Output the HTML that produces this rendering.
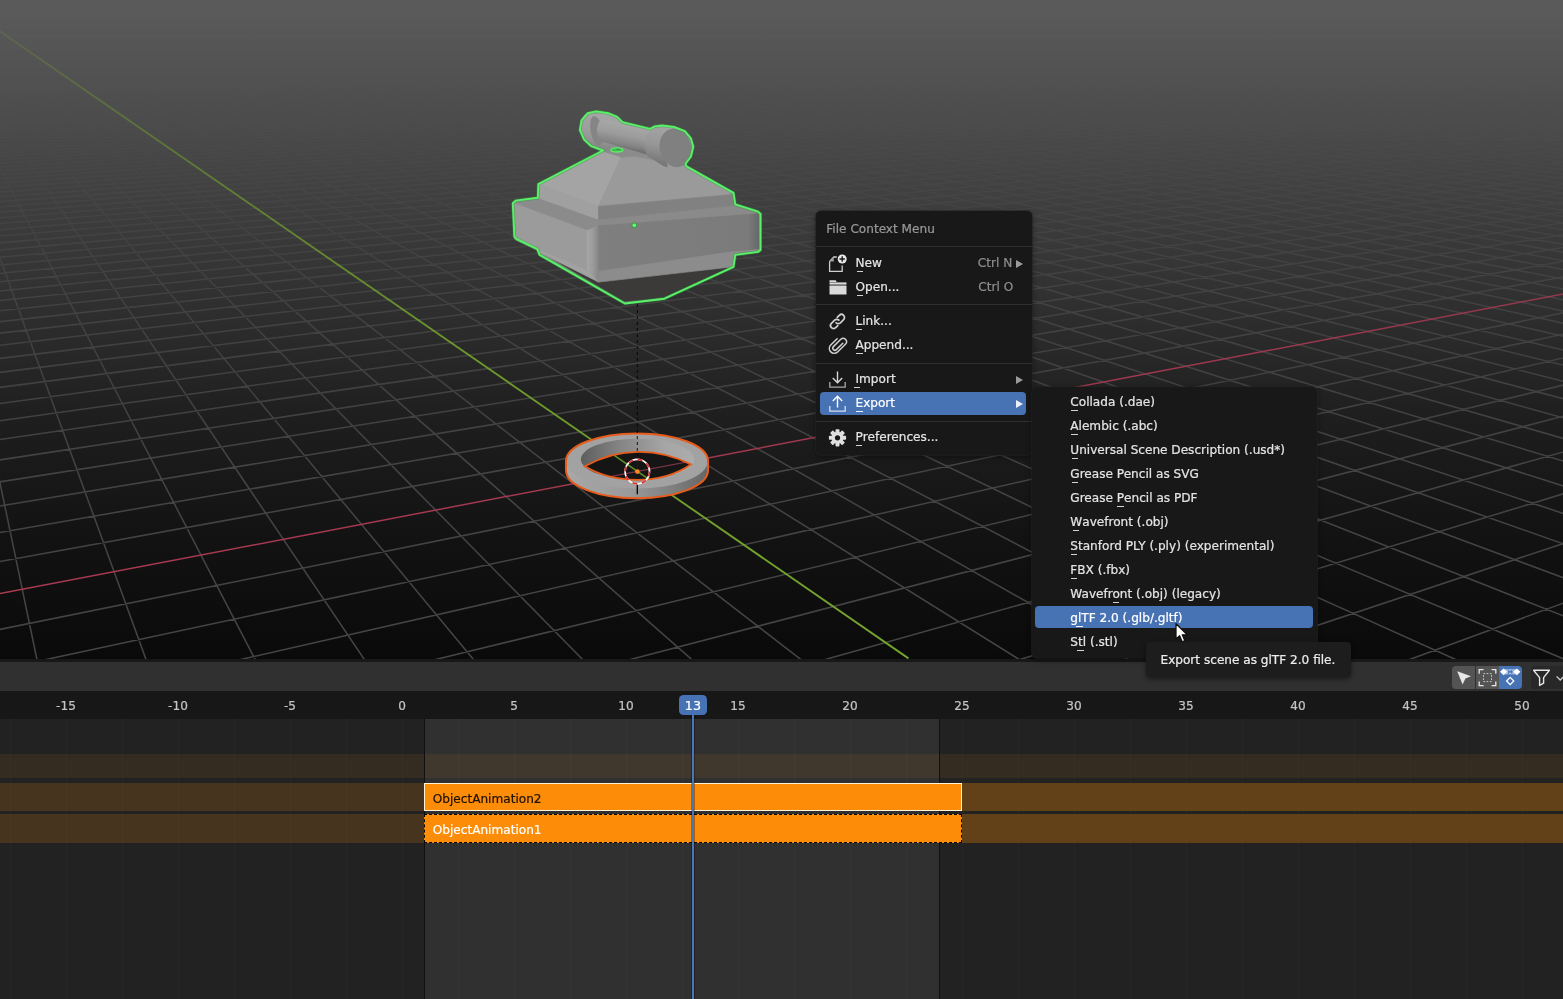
<!DOCTYPE html><html lang="en"><head><meta charset="utf-8"><title>Blender - File Context Menu</title><style>
*{box-sizing:border-box;margin:0;padding:0}
html,body{width:1563px;height:999px;overflow:hidden;background:#0b0b0b}
body{font-family:"DejaVu Sans","Liberation Sans",sans-serif;font-size:12.1px;color:#e0e0e0;position:relative;-webkit-text-stroke:.22px currentColor}
u{text-decoration:none;position:relative}u::after{content:"";position:absolute;left:50%;width:6.4px;margin-left:-3.2px;bottom:-2.4px;height:1.4px;background:currentColor;opacity:.92}
#vp{position:absolute;left:0;top:0;width:1563px;height:659px;overflow:hidden;
 background:linear-gradient(180deg,#5a5a5a 0px,#585858 30px,#4d4d4d 110px,#3c3c3c 220px,#2d2d2d 320px,#1e1e1e 420px,#121212 540px,#0a0a0a 659px)}
#vp svg{position:absolute;left:0;top:0}
#tl{position:absolute;left:0;top:659px;width:1563px;height:340px;background:#181818}
#tlhead{position:absolute;left:0;top:2.5px;width:100%;height:29.5px;background:#303030}
#ruler{position:absolute;left:0;top:32px;width:100%;height:27.5px;background:#171717}
.rl{position:absolute;top:0;width:40px;text-align:center;line-height:31px;font-size:12.1px;color:#c4c4c4}
#tracks{position:absolute;left:0;top:59.5px;width:100%;height:280.5px;background:#222;overflow:hidden}
.inrange{position:absolute;top:0;bottom:0;background:#303030}
.vg{position:absolute;top:0;bottom:0;width:1px;background:rgba(255,255,255,.02)}
.fl{position:absolute;top:0;bottom:0;width:1.3px;background:#101010}
.rowA{position:absolute;left:0;right:0;background:rgba(255,150,20,.085)}
.rowL{position:absolute;background:rgba(255,140,10,.17)}
.rowR{position:absolute;background:rgba(255,140,0,.295)}
.strip{position:absolute;background:#fd8c08;font-size:12.1px;line-height:27px}
.strip span{position:absolute;left:7.4px;top:0}
.s2{border:1.3px solid #fff3d6;color:#1c1204;line-height:31.4px}
.s1{border:1.7px dashed #050505;color:#fff;line-height:31.2px}
#cfline{position:absolute;left:692.1px;top:40px;width:2.1px;bottom:0;background:#4b76b8;box-shadow:0 0 0 .7px rgba(0,0,0,.45)}
#cfbox{position:absolute;left:678.6px;top:36px;width:28.6px;height:19.8px;border-radius:4.5px;background:#4772b3;color:#fff;text-align:center;line-height:22.6px;font-size:12.7px;overflow:hidden}
.hb{position:absolute;top:7px;width:23px;height:22.6px;background:#545454}
.hb.on{background:#4772b3}
.hb svg{position:absolute;left:0;top:0}
#filt{position:absolute;left:1530.5px;top:7px;width:40px;height:22.6px;background:#282828;border-radius:4px 0 0 4px}
.menu,#tip,#tl{will-change:transform}
.menu{position:absolute;background:#181818;border-radius:5px;box-shadow:0 0 0 .6px #242424,0 2px 6px rgba(0,0,0,.45)}
.mtitle{position:absolute;left:10.3px;top:10px;font-size:12.1px;color:#989898;line-height:16px}
.sep{position:absolute;left:0;right:0;height:1.2px;background:#2f2f2f}
.row{position:absolute;left:4.2px;width:206px;height:22.6px;border-radius:4px;line-height:23.8px}
.row.sel,.row2.sel{background:#4772b3;color:#fff}
.row .ic{position:absolute;left:7.2px;top:1.1px}
.lbl{position:absolute;left:35.3px;top:0;color:#e4e4e4}
.sel .lbl,.sel .lbl2{color:#fff}
.sc{position:absolute;top:0;color:#8e8e8e}
.arr{position:absolute;right:3.4px;top:7.6px;width:0;height:0;border-left:7px solid #9a9a9a;border-top:4.1px solid transparent;border-bottom:4.1px solid transparent}
.sel .arr{border-left-color:#e8eefa}
.row2{position:absolute;left:3.2px;width:277.8px;height:22px;border-radius:4px;line-height:24px}
.lbl2{position:absolute;left:35.1px;top:0;color:#e4e4e4}
#tip{position:absolute;left:1145.5px;top:642px;width:205px;height:34.5px;border-radius:4.5px;background:#1d1d1d;box-shadow:0 2px 5px rgba(0,0,0,.5);color:#ececec;line-height:36px;padding-left:14.5px;font-size:12.1px;white-space:nowrap}
#mouse{position:absolute;left:1173.8px;top:621.6px}
</style></head><body>
<div id="vp"><svg width="1563" height="659" viewBox="0 0 1563 659">
<defs>
<linearGradient id="gfade" x1="0" y1="0" x2="0" y2="659" gradientUnits="userSpaceOnUse">
<stop offset="0" stop-color="#fff" stop-opacity="0"/><stop offset=".03" stop-color="#fff" stop-opacity="0"/><stop offset=".08" stop-color="#fff" stop-opacity=".04"/><stop offset=".18" stop-color="#fff" stop-opacity=".13"/><stop offset=".3" stop-color="#fff" stop-opacity=".26"/><stop offset=".45" stop-color="#fff" stop-opacity=".5"/><stop offset=".7" stop-color="#fff" stop-opacity=".72"/><stop offset="1" stop-color="#fff" stop-opacity=".8"/></linearGradient>
<linearGradient id="gfade2" x1="0" y1="0" x2="0" y2="659" gradientUnits="userSpaceOnUse"><stop offset="0" stop-color="#fff" stop-opacity=".1"/><stop offset=".1" stop-color="#fff" stop-opacity=".27"/><stop offset=".3" stop-color="#fff" stop-opacity=".62"/><stop offset=".55" stop-color="#fff" stop-opacity=".9"/><stop offset="1" stop-color="#fff" stop-opacity="1"/></linearGradient>
<mask id="mfade2" maskUnits="userSpaceOnUse" x="0" y="0" width="1563" height="659"><rect width="1563" height="659" fill="url(#gfade2)"/></mask>
<mask id="mfade" maskUnits="userSpaceOnUse" x="0" y="0" width="1563" height="659"><rect width="1563" height="659" fill="url(#gfade)"/></mask>
<linearGradient id="gcorner" x1="586.7" y1="0" x2="598.6" y2="0" gradientUnits="userSpaceOnUse"><stop offset="0" stop-color="#a6a6a6"/><stop offset=".5" stop-color="#9c9c9c"/><stop offset="1" stop-color="#858585"/></linearGradient>
<linearGradient id="gfront" x1="598" y1="0" x2="760" y2="0" gradientUnits="userSpaceOnUse"><stop offset="0" stop-color="#7f7f7f"/><stop offset=".85" stop-color="#7b7b7b"/><stop offset=".93" stop-color="#7a7a7a"/><stop offset="1" stop-color="#666"/></linearGradient>
<linearGradient id="gtube" x1="624" y1="123" x2="619" y2="148.5" gradientUnits="userSpaceOnUse"><stop offset="0" stop-color="#a8a8a8"/><stop offset=".45" stop-color="#9c9c9c"/><stop offset=".8" stop-color="#858585"/><stop offset="1" stop-color="#6c6c6c"/></linearGradient>
<linearGradient id="gcap" x1="593" y1="111" x2="586" y2="150" gradientUnits="userSpaceOnUse"><stop offset="0" stop-color="#a6a6a6"/><stop offset=".55" stop-color="#9c9c9c"/><stop offset="1" stop-color="#808080"/></linearGradient>
<linearGradient id="gcap2" x1="660" y1="126" x2="652" y2="163" gradientUnits="userSpaceOnUse"><stop offset="0" stop-color="#a4a4a4"/><stop offset=".5" stop-color="#979797"/><stop offset="1" stop-color="#757575"/></linearGradient>
<linearGradient id="gring" x1="566" y1="0" x2="708" y2="0" gradientUnits="userSpaceOnUse"><stop offset="0" stop-color="#a8a8a8"/><stop offset=".45" stop-color="#9a9a9a"/><stop offset=".8" stop-color="#7a7a7a"/><stop offset="1" stop-color="#666"/></linearGradient>
<linearGradient id="gringin" x1="581" y1="0" x2="694" y2="0" gradientUnits="userSpaceOnUse"><stop offset="0" stop-color="#5e5e5e"/><stop offset=".35" stop-color="#858585"/><stop offset=".75" stop-color="#a6a6a6"/><stop offset="1" stop-color="#acacac"/></linearGradient>
</defs>
<g mask="url(#mfade)"><path d="M-5 459L37.9 664M-5 244.6L147.7 664M-5 158.2L257.5 664M-5 111.6L367.4 664M-5 82.3L477.2 664M-5 62.3L587 664M-5 47.7L696.9 664M-5 36.7L806.7 664M-5 20.9L1026.4 664M-5 15.1L1136.2 664M-5 10.3L1246.1 664M-5 6.2L1355.9 664M-5 2.6L1465.7 664M-5 -0.5L1568 660.8M-5 -3.2L1568 617.7M-3.4 -5L1568 579.5M2.8 -5L1568 545.5M8.9 -5L1568 515M15.1 -5L1568 487.5M21.3 -5L1568 462.5M27.4 -5L1568 439.8M33.6 -5L1568 419.1M39.8 -5L1568 400M45.9 -5L1568 382.5M52.1 -5L1568 366.3M58.3 -5L1568 351.2M64.4 -5L1568 337.3M70.6 -5L1568 324.2M76.8 -5L1568 312.1M82.9 -5L1568 300.7M89.1 -5L1568 290M95.3 -5L1568 280M101.4 -5L1568 270.5M107.6 -5L1568 261.6M113.8 -5L1568 253.2M119.9 -5L1568 245.2M126.1 -5L1568 237.6M132.3 -5L1568 230.5M138.5 -5L1568 223.6M144.6 -5L1568 217.1M150.8 -5L1568 211M157 -5L1568 205.1M163.1 -5L1568 199.4M169.3 -5L1568 194M175.5 -5L1568 188.9M181.6 -5L1568 184M187.8 -5L1568 179.2M194 -5L1568 174.7M200.1 -5L1568 170.3M206.3 -5L1568 166.1M212.5 -5L1568 162.1M218.6 -5L1568 158.2M224.8 -5L1568 154.5M231 -5L1568 150.9M237.1 -5L1568 147.4M243.3 -5L1568 144.1M249.5 -5L1568 140.8M255.6 -5L1568 137.7M261.8 -5L1568 134.7M268 -5L1568 131.7M274.1 -5L1568 128.9M280.3 -5L1568 126.2M286.5 -5L1568 123.5M292.6 -5L1568 120.9M298.8 -5L1568 118.4M305 -5L1568 116M311.1 -5L1568 113.7M317.3 -5L1568 111.4M323.5 -5L1568 109.2M329.6 -5L1568 107M335.8 -5L1568 104.9M342 -5L1568 102.9M348.1 -5L1568 100.9M354.3 -5L1568 98.9M360.5 -5L1568 97.1M366.6 -5L1568 95.2M372.8 -5L1568 93.4M379 -5L1568 91.7M385.1 -5L1568 90M391.3 -5L1568 88.3M397.5 -5L1568 86.7M403.6 -5L1568 85.1M409.8 -5L1568 83.6M416 -5L1568 82.1M422.1 -5L1568 80.6M428.3 -5L1568 79.2M434.5 -5L1568 77.8M440.7 -5L1568 76.4M446.8 -5L1568 75.1M453 -5L1568 73.8M459.2 -5L1568 72.5M465.3 -5L1568 71.2M471.5 -5L1568 70M477.7 -5L1568 68.8M483.8 -5L1568 67.6M490 -5L1568 66.5M496.2 -5L1568 65.3M502.3 -5L1568 64.2M508.5 -5L1568 63.1M514.7 -5L1568 62.1M520.8 -5L1568 61M527 -5L1568 60M533.2 -5L1568 59M539.3 -5L1568 58M545.5 -5L1568 57M551.7 -5L1568 56.1M557.8 -5L1568 55.2M564 -5L1568 54.3M570.2 -5L1568 53.4M576.3 -5L1568 52.5M582.5 -5L1568 51.6M588.7 -5L1568 50.8M594.8 -5L1568 49.9M601 -5L1568 49.1M607.2 -5L1568 48.3M613.3 -5L1568 47.5M619.5 -5L1568 46.7M625.7 -5L1568 46M631.8 -5L1568 45.2M638 -5L1568 44.5M644.2 -5L1568 43.7M650.3 -5L1568 43M656.5 -5L1568 42.3M662.7 -5L1568 41.6M668.8 -5L1568 40.9M675 -5L1568 40.3M681.2 -5L1568 39.6M687.3 -5L1568 38.9M693.5 -5L1568 38.3M699.7 -5L1568 37.7M705.8 -5L1568 37M712 -5L1568 36.4M718.2 -5L1568 35.8M724.3 -5L1568 35.2M730.5 -5L1568 34.6M736.7 -5L1568 34.1M742.8 -5L1568 33.5M749 -5L1568 32.9M755.2 -5L1568 32.4M761.4 -5L1568 31.8M767.5 -5L1568 31.3M773.7 -5L1568 30.8M779.9 -5L1568 30.2M786 -5L1568 29.7M792.2 -5L1568 29.2M798.4 -5L1568 28.7M804.5 -5L1568 28.2M810.7 -5L1568 27.7M816.9 -5L1568 27.2M823 -5L1568 26.8M829.2 -5L1568 26.3M835.4 -5L1568 25.8M841.5 -5L1568 25.4M847.7 -5L1568 24.9M853.9 -5L1568 24.5M860 -5L1568 24M866.2 -5L1568 23.6M872.4 -5L1568 23.2M878.5 -5L1568 22.7M884.7 -5L1568 22.3M890.9 -5L1568 21.9M897 -5L1568 21.5M903.2 -5L1568 21.1M909.4 -5L1568 20.7M915.5 -5L1568 20.3M921.7 -5L1568 19.9M927.9 -5L1568 19.5M934 -5L1568 19.2M940.2 -5L1568 18.8M946.4 -5L1568 18.4M952.5 -5L1568 18M958.7 -5L1568 17.7M964.9 -5L1568 17.3M971 -5L1568 17M977.2 -5L1568 16.6M983.4 -5L1568 16.3M989.5 -5L1568 15.9M995.7 -5L1568 15.6M1001.9 -5L1568 15.3M1008 -5L1568 14.9M1014.2 -5L1568 14.6M1020.4 -5L1568 14.3M1026.5 -5L1568 14M1032.7 -5L1568 13.6M1038.9 -5L1568 13.3M1045 -5L1568 13M1051.2 -5L1568 12.7M1057.4 -5L1568 12.4M1063.6 -5L1568 12.1M1069.7 -5L1568 11.8M1075.9 -5L1568 11.5M1082.1 -5L1568 11.2M1088.2 -5L1568 10.9M1094.4 -5L1568 10.6M1100.6 -5L1568 10.4M1106.7 -5L1568 10.1M1112.9 -5L1568 9.8M1119.1 -5L1568 9.5M1125.2 -5L1568 9.3M1131.4 -5L1568 9M1137.6 -5L1568 8.7M1143.7 -5L1568 8.5M1149.9 -5L1568 8.2M1156.1 -5L1568 7.9M1162.2 -5L1568 7.7M1168.4 -5L1568 7.4M1174.6 -5L1568 7.2M1568 601.4L1397.3 664M1568 541.9L1201.3 664M1568 492.4L1005.2 664M1568 450.6L809.2 664M1568 414.9L613.1 664M1568 383.9L417.1 664M1568 356.9L221 664M1568 333.1L25 664M1568 311.9L-5 630.4M1568 276L-5 562.4M1568 260.6L-5 533.3M1568 246.6L-5 506.8M1568 233.9L-5 482.7M1568 222.2L-5 460.6M1568 211.5L-5 440.3M1568 201.6L-5 421.5M1568 192.4L-5 404.1M1568 183.9L-5 388M1568 175.9L-5 373M1568 168.6L-5 359M1568 161.6L-5 345.9M1568 155.2L-5 333.7M1568 149.1L-5 322.2M1568 143.3L-5 311.3M1568 138L-5 301.1M1568 132.9L-5 291.5M1568 128L-5 282.3M1568 123.5L-5 273.7M1568 119.1L-5 265.5M1568 115L-5 257.7M1568 111.1L-5 250.3M1568 107.4L-5 243.3M1568 103.8L-5 236.5M1568 100.5L-5 230.1M1568 97.2L-5 224M1568 94.1L-5 218.1M1568 91.2L-5 212.5M1568 88.3L-5 207.1M1568 85.6L-5 202M1568 83L-5 197M1568 80.5L-5 192.3M1568 78L-5 187.7M1568 75.7L-5 183.3M1568 73.5L-5 179.1M1568 71.3L-5 175M1568 69.2L-5 171.1M1568 67.2L-5 167.3M1568 65.3L-5 163.6M1568 63.4L-5 160.1M1568 61.6L-5 156.6M1568 59.9L-5 153.3M1568 58.2L-5 150.1M1568 56.5L-5 147M1568 55L-5 144M1568 53.4L-5 141.1M1568 51.9L-5 138.3M1568 50.5L-5 135.5M1568 49.1L-5 132.9M1568 47.7L-5 130.3M1568 46.4L-5 127.8M1568 45.1L-5 125.4M1568 43.9L-5 123M1568 42.6L-5 120.7M1568 41.5L-5 118.5M1568 40.3L-5 116.3M1568 39.2L-5 114.1M1568 38.1L-5 112.1M1568 37L-5 110.1M1568 36L-5 108.1M1568 35L-5 106.2M1568 34L-5 104.3M1568 33L-5 102.5M1568 32.1L-5 100.7M1568 31.2L-5 99M1568 30.3L-5 97.3M1568 29.4L-5 95.6M1568 28.5L-5 94M1568 27.7L-5 92.4M1568 26.9L-5 90.9M1568 26.1L-5 89.4M1568 25.3L-5 87.9M1568 24.6L-5 86.5M1568 23.8L-5 85M1568 23.1L-5 83.7M1568 22.4L-5 82.3M1568 21.7L-5 81M1568 21L-5 79.7M1568 20.3L-5 78.4M1568 19.6L-5 77.2M1568 19L-5 75.9M1568 18.4L-5 74.7M1568 17.7L-5 73.6M1568 17.1L-5 72.4M1568 16.5L-5 71.3M1568 16L-5 70.2M1568 15.4L-5 69.1M1568 14.8L-5 68M1568 14.3L-5 67M1568 13.7L-5 66M1568 13.2L-5 65M1568 12.7L-5 64M1568 12.2L-5 63M1568 11.6L-5 62M1568 11.2L-5 61.1M1568 10.7L-5 60.2M1568 10.2L-5 59.3M1568 9.7L-5 58.4M1568 9.3L-5 57.5M1568 8.8L-5 56.6M1568 8.3L-5 55.8M1568 7.9L-5 55M1568 7.5L-5 54.1M1568 7.1L-5 53.3M1568 6.6L-5 52.5M1568 6.2L-5 51.8M1568 5.8L-5 51M1568 5.4L-5 50.2M1568 5L-5 49.5M1568 4.6L-5 48.8M1568 4.3L-5 48.1M1568 3.9L-5 47.3M1568 3.5L-5 46.6M1568 3.1L-5 46M1568 2.8L-5 45.3M1568 2.4L-5 44.6M1568 2.1L-5 44M1568 1.7L-5 43.3M1568 1.4L-5 42.7M1568 1.1L-5 42M1568 0.7L-5 41.4M1568 0.4L-5 40.8M1568 0.1L-5 40.2M1568 -0.2L-5 39.6M1568 -0.5L-5 39M1568 -0.8L-5 38.4M1568 -1.1L-5 37.9M1568 -1.4L-5 37.3M1568 -1.7L-5 36.7M1568 -2L-5 36.2M1568 -2.3L-5 35.7M1568 -2.6L-5 35.1M1568 -2.9L-5 34.6M1568 -3.1L-5 34.1M1568 -3.4L-5 33.6M1568 -3.7L-5 33.1M1568 -3.9L-5 32.6M1568 -4.2L-5 32.1M1568 -4.4L-5 31.6M1568 -4.7L-5 31.1M1568 -4.9L-5 30.6M1559.2 -5L-5 30.2M1548.2 -5L-5 29.7M1537.2 -5L-5 29.2M1526.2 -5L-5 28.8M1515.2 -5L-5 28.3M1504.2 -5L-5 27.9M1493.2 -5L-5 27.5M1482.2 -5L-5 27M1471.2 -5L-5 26.6M1460.1 -5L-5 26.2M1449.1 -5L-5 25.8M1438.1 -5L-5 25.4M1427.1 -5L-5 25M1416.1 -5L-5 24.6M1405.1 -5L-5 24.2M1394.1 -5L-5 23.8M1383.1 -5L-5 23.4M1372.1 -5L-5 23M1361.1 -5L-5 22.6M1350.1 -5L-5 22.2M1339.1 -5L-5 21.9M1328 -5L-5 21.5M1317 -5L-5 21.1M1306 -5L-5 20.8M1295 -5L-5 20.4M1284 -5L-5 20.1M1273 -5L-5 19.7M1262 -5L-5 19.4M1251 -5L-5 19M1240 -5L-5 18.7M1229 -5L-5 18.4M1218 -5L-5 18M1207 -5L-5 17.7M1195.9 -5L-5 17.4M1184.9 -5L-5 17.1M1173.9 -5L-5 16.8M1162.9 -5L-5 16.4M1151.9 -5L-5 16.1M1140.9 -5L-5 15.8M1129.9 -5L-5 15.5M1118.9 -5L-5 15.2M1107.9 -5L-5 14.9M1096.9 -5L-5 14.6M1085.9 -5L-5 14.3M1074.9 -5L-5 14.1M1063.8 -5L-5 13.8M1052.8 -5L-5 13.5M1041.8 -5L-5 13.2M1030.8 -5L-5 12.9M1019.8 -5L-5 12.7M1008.8 -5L-5 12.4M997.8 -5L-5 12.1M986.8 -5L-5 11.8M975.8 -5L-5 11.6M964.8 -5L-5 11.3M953.8 -5L-5 11.1M942.8 -5L-5 10.8M931.7 -5L-5 10.5M920.7 -5L-5 10.3M909.7 -5L-5 10M898.7 -5L-5 9.8M887.7 -5L-5 9.5M876.7 -5L-5 9.3M865.7 -5L-5 9.1M854.7 -5L-5 8.8M843.7 -5L-5 8.6M832.7 -5L-5 8.3M821.7 -5L-5 8.1M810.7 -5L-5 7.9M799.6 -5L-5 7.7M788.6 -5L-5 7.4M777.6 -5L-5 7.2M766.6 -5L-5 7M755.6 -5L-5 6.8M744.6 -5L-5 6.5M733.6 -5L-5 6.3M722.6 -5L-5 6.1M711.6 -5L-5 5.9M700.6 -5L-5 5.7M689.6 -5L-5 5.5M678.6 -5L-5 5.3M667.5 -5L-5 5.1M656.5 -5L-5 4.8M645.5 -5L-5 4.6M634.5 -5L-5 4.4M623.5 -5L-5 4.2M612.5 -5L-5 4M601.5 -5L-5 3.8M590.5 -5L-5 3.7M579.5 -5L-5 3.5M568.5 -5L-5 3.3M557.5 -5L-5 3.1M546.4 -5L-5 2.9M535.4 -5L-5 2.7M524.4 -5L-5 2.5M513.4 -5L-5 2.3M502.4 -5L-5 2.1M491.4 -5L-5 2M480.4 -5L-5 1.8M469.4 -5L-5 1.6M458.4 -5L-5 1.4M447.4 -5L-5 1.2M436.4 -5L-5 1.1M425.4 -5L-5 0.9M414.3 -5L-5 0.7M403.3 -5L-5 0.6M392.3 -5L-5 0.4M381.3 -5L-5 0.2M370.3 -5L-5 0M359.3 -5L-5 -0.1M348.3 -5L-5 -0.3M337.3 -5L-5 -0.4M326.3 -5L-5 -0.6M315.3 -5L-5 -0.8M304.3 -5L-5 -0.9M293.3 -5L-5 -1.1M282.2 -5L-5 -1.2M271.2 -5L-5 -1.4M260.2 -5L-5 -1.6M249.2 -5L-5 -1.7M238.2 -5L-5 -1.9M227.2 -5L-5 -2M216.2 -5L-5 -2.2M205.2 -5L-5 -2.3M194.2 -5L-5 -2.5M183.2 -5L-5 -2.6M172.2 -5L-5 -2.8M161.2 -5L-5 -2.9M150.1 -5L-5 -3.1M139.1 -5L-5 -3.2M128.1 -5L-5 -3.3M117.1 -5L-5 -3.5M106.1 -5L-5 -3.6M95.1 -5L-5 -3.8M84.1 -5L-5 -3.9M73.1 -5L-5 -4M62.1 -5L-5 -4.2M51.1 -5L-5 -4.3M40.1 -5L-5 -4.5M29.1 -5L-5 -4.6M18 -5L-5 -4.7M7 -5L-5 -4.9M-4 -5L-5 -5" stroke="#545454" stroke-width="1.55" fill="none"/></g>
<g mask="url(#mfade2)"><path d="M0 31.4L908.4 658.4" stroke="#76a62e" stroke-width="1.9"/>
<path d="M0 593.6L1563 294" stroke="#ac3b53" stroke-width="1.5"/></g>
<path d="M566.0 461.0 A71.0 27.6 0 0 1 708.0 461.0 L708.0 470.6 A71.0 27.6 0 0 1 566.0 470.6 Z" fill="url(#gring)"/>
<ellipse cx="637.0" cy="461.0" rx="71.0" ry="27.6" fill="#a2a2a2"/>
<ellipse cx="637.5" cy="459.3" rx="56.6" ry="20.5" fill="url(#gringin)"/>
<path d="M584.9 466.3 Q611 451.6 638.9 451.8 Q667 452 690.9 464.4 Q668 479.8 637.6 479.8 Q607 479.8 584.9 466.3 Z" fill="#151515"/>
<clipPath id="eyeclip"><path d="M584.9 466.3 Q611 451.6 638.9 451.8 Q667 452 690.9 464.4 Q668 479.8 637.6 479.8 Q607 479.8 584.9 466.3 Z"/></clipPath>
<g clip-path="url(#eyeclip)"><path d="M0 31.4L908.4 658.4" stroke="#5f8d26" stroke-width="1.6"/><path d="M0 593.6L1563 294" stroke="#7a3345" stroke-width="1.3"/></g>
<path d="M584.9 466.3 Q611 451.6 638.9 451.8 Q667 452 690.9 464.4 Q668 479.8 637.6 479.8 Q607 479.8 584.9 466.3 Z" fill="none" stroke="#e85c1b" stroke-width="1.8"/>
<path d="M566.0 461.0 A71.0 27.6 0 0 1 708.0 461.0 L708.0 470.6 A71.0 27.6 0 0 1 566.0 470.6 Z" fill="none" stroke="#e85c1b" stroke-width="2"/>
<polygon points="603.0,150.5 538.4,184.1 537.8,197.8 515.6,200.6 512.8,203.2 514.4,236.8 516.8,239.2 537.2,248.9 539.6,254.9 624.9,303.5 664.4,298.7 733.5,266.9 735.3,254.9 758.1,251.9 760.5,250.1 760.5,214.0 758.1,211.6 735.3,204.4 733.5,192.8 686.1,166.1 685.5,163.7 690.9,156.5 693.3,146.8 690.9,138.4 684.9,131.2 674.1,127.0 662.0,125.5 654.8,126.4 650.1,128.8 622.5,122.2 617.1,116.8 608.1,113.2 596.1,111.4 587.7,113.2 581.7,120.4 579.9,130.0 584.1,139.6 591.3,146.2 603.3,150.5" fill="#8d8d8d" stroke="#8d8d8d" stroke-width=".7" stroke-linejoin="round" />
<polygon points="539.9,251.5 598.6,281.2 733.0,265.9 733.9,268.0 664.9,298.2 624.1,301.6" fill="#3b3a38" stroke="#3b3a38" stroke-width=".7" stroke-linejoin="round" />
<polygon points="604.5,150.5 622.4,154.5 598.6,206.4 539.9,184.6" fill="#a4a4a4" stroke="#a4a4a4" stroke-width=".7" stroke-linejoin="round" />
<polygon points="622.4,154.5 685.4,166.4 733.9,194.4 598.6,206.4" fill="#9a9a9a" stroke="#9a9a9a" stroke-width=".7" stroke-linejoin="round" />
<polygon points="539.9,184.6 598.6,206.4 598.6,220.3 538.7,198.7" fill="#a0a0a0" stroke="#a0a0a0" stroke-width=".7" stroke-linejoin="round" />
<polygon points="513.8,203.3 538.7,198.7 598.6,220.3 598.6,225.4 586.7,230.2" fill="#8b8b8b" stroke="#8b8b8b" stroke-width=".7" stroke-linejoin="round" />
<polygon points="513.8,203.3 586.7,230.2 586.7,270.2 539.9,251.5 514.9,239.5" fill="#9b9b9b" stroke="#9b9b9b" stroke-width=".7" stroke-linejoin="round" />
<polygon points="586.7,230.2 598.6,225.4 598.6,282.1 586.7,270.2" fill="url(#gcorner)" />
<polygon points="539.9,250.6 586.7,270.2 598.6,282.1 539.9,252.6" fill="#a2a2a2" stroke="#a2a2a2" stroke-width=".7" stroke-linejoin="round" />
<polygon points="598.6,206.4 733.9,194.4 734.7,206.0 598.6,220.0" fill="#818181" stroke="#818181" stroke-width=".7" stroke-linejoin="round" />
<polygon points="598.6,220.0 734.7,206.0 758.9,213.2 598.6,225.6" fill="#8a8a8a" stroke="#8a8a8a" stroke-width=".7" stroke-linejoin="round" />
<polygon points="598.6,225.6 758.9,213.2 759.7,248.9 733.9,251.5 598.6,271.4" fill="url(#gfront)" />
<polygon points="598.6,271.4 733.9,251.5 733.0,266.8 598.6,282.1" fill="#8c8c8c" stroke="#8c8c8c" stroke-width=".7" stroke-linejoin="round" />
<polygon points="604.0,151.6 621.9,157.2 645.2,154.7 635.2,147.3 611.9,147.3" fill="#8b8b8b" stroke="#8b8b8b" stroke-width=".7" stroke-linejoin="round" />
<polygon points="603.6,151.4 599.5,150.6 592.0,147.3 585.3,141.4 581.2,134.8 579.5,128.1 580.3,120.6 584.5,114.8 591.1,111.9 599.5,111.5 609.4,114.0 616.1,117.3 621.9,122.7 621.9,137.3 611.9,148.9" fill="url(#gcap)" />
<ellipse cx="596.7" cy="130.8" rx="6.1" ry="14.8" transform="rotate(-11 596.7 130.8)" fill="#858585"/>
<polygon points="600.7,119.6 621.9,123.0 650.2,130.0 647.3,154.9 644.4,153.8 599.9,140.8 597.4,135.6 596.8,129.8 598.0,124.0" fill="url(#gtube)" />
<polygon points="650.2,130.0 655.2,126.6 667.7,126.3 680.2,129.0 663.5,143.9 667.7,167.2 663.5,166.0 646.9,155.7 644.5,147.3 645.6,136.4" fill="url(#gcap2)" />
<ellipse cx="675.3" cy="147.9" rx="15.6" ry="19.4" transform="rotate(-13 675.3 147.9)" fill="#808080"/>
<polygon points="603.0,150.5 538.4,184.1 537.8,197.8 515.6,200.6 512.8,203.2 514.4,236.8 516.8,239.2 537.2,248.9 539.6,254.9 624.9,303.5 664.4,298.7 733.5,266.9 735.3,254.9 758.1,251.9 760.5,250.1 760.5,214.0 758.1,211.6 735.3,204.4 733.5,192.8 686.1,166.1 685.5,163.7 690.9,156.5 693.3,146.8 690.9,138.4 684.9,131.2 674.1,127.0 662.0,125.5 654.8,126.4 650.1,128.8 622.5,122.2 617.1,116.8 608.1,113.2 596.1,111.4 587.7,113.2 581.7,120.4 579.9,130.0 584.1,139.6 591.3,146.2 603.3,150.5" fill="none" stroke="#2f9a3c" stroke-width="3.2" stroke-linejoin="round" opacity=".55"/>
<polygon points="603.0,150.5 538.4,184.1 537.8,197.8 515.6,200.6 512.8,203.2 514.4,236.8 516.8,239.2 537.2,248.9 539.6,254.9 624.9,303.5 664.4,298.7 733.5,266.9 735.3,254.9 758.1,251.9 760.5,250.1 760.5,214.0 758.1,211.6 735.3,204.4 733.5,192.8 686.1,166.1 685.5,163.7 690.9,156.5 693.3,146.8 690.9,138.4 684.9,131.2 674.1,127.0 662.0,125.5 654.8,126.4 650.1,128.8 622.5,122.2 617.1,116.8 608.1,113.2 596.1,111.4 587.7,113.2 581.7,120.4 579.9,130.0 584.1,139.6 591.3,146.2 603.3,150.5" fill="none" stroke="#5cf06a" stroke-width="1.9" stroke-linejoin="round"/>
<ellipse cx="616.9" cy="149.9" rx="6" ry="2.1" fill="#3fc04e" stroke="#5cf06a" stroke-width="1.3"/>
<ellipse cx="618.2" cy="149.4" rx="2.2" ry="0.7" fill="#4d8a52"/>
<circle cx="634.3" cy="225.3" r="2.4" fill="#6cf47a" stroke="#2c9a3a" stroke-width="1"/>
<path d="M637.3 304V456" stroke="#000" stroke-width="1" stroke-dasharray="3 3" opacity=".85"/>
<path d="M637.3 484V494.2" stroke="#000" stroke-width="1.3"/><path d="M637.3 459.5V468" stroke="#222" stroke-width="1" opacity=".6"/>
<circle cx="637.3" cy="471.6" r="12.2" fill="none" stroke="#fff" stroke-width="1.7"/>
<circle cx="637.3" cy="471.6" r="12.2" fill="none" stroke="#e22b2b" stroke-width="1.7" stroke-dasharray="4.79 4.79"/>
<circle cx="637.4" cy="471.6" r="2.3" fill="#ff8a1c"/>
</svg></div>
<div id="tl">
<div id="tlhead"></div>
<div id="ruler">
<span class="rl" style="left:46.0px">-15</span>
<span class="rl" style="left:158.0px">-10</span>
<span class="rl" style="left:270.0px">-5</span>
<span class="rl" style="left:382.0px">0</span>
<span class="rl" style="left:494.0px">5</span>
<span class="rl" style="left:606.0px">10</span>
<span class="rl" style="left:718.0px">15</span>
<span class="rl" style="left:830.0px">20</span>
<span class="rl" style="left:942.0px">25</span>
<span class="rl" style="left:1054.0px">30</span>
<span class="rl" style="left:1166.0px">35</span>
<span class="rl" style="left:1278.0px">40</span>
<span class="rl" style="left:1390.0px">45</span>
<span class="rl" style="left:1502.0px">50</span>
</div>
<div id="tracks">
<div class="inrange" style="left:424.4px;width:515.2px"></div>
<i class="vg" style="left:9.5px"></i><i class="vg" style="left:65.5px"></i><i class="vg" style="left:121.5px"></i><i class="vg" style="left:177.5px"></i><i class="vg" style="left:233.5px"></i><i class="vg" style="left:289.5px"></i><i class="vg" style="left:345.5px"></i><i class="vg" style="left:401.5px"></i><i class="vg" style="left:457.5px"></i><i class="vg" style="left:513.5px"></i><i class="vg" style="left:569.5px"></i><i class="vg" style="left:625.5px"></i><i class="vg" style="left:681.5px"></i><i class="vg" style="left:737.5px"></i><i class="vg" style="left:793.5px"></i><i class="vg" style="left:849.5px"></i><i class="vg" style="left:905.5px"></i><i class="vg" style="left:961.5px"></i><i class="vg" style="left:1017.5px"></i><i class="vg" style="left:1073.5px"></i><i class="vg" style="left:1129.5px"></i><i class="vg" style="left:1185.5px"></i><i class="vg" style="left:1241.5px"></i><i class="vg" style="left:1297.5px"></i><i class="vg" style="left:1353.5px"></i><i class="vg" style="left:1409.5px"></i><i class="vg" style="left:1465.5px"></i><i class="vg" style="left:1521.5px"></i>
<div class="rowA" style="top:35px;height:24.5px"></div>
<div class="rowL" style="top:64.0px;height:28.5px;left:0;width:424.4px"></div>
<div class="rowR" style="top:64.0px;height:28.5px;left:962.0px;right:0"></div>
<div class="rowL" style="top:95.0px;height:29.0px;left:0;width:424.4px"></div>
<div class="rowR" style="top:95.0px;height:29.0px;left:962.0px;right:0"></div>
<i class="fl" style="left:423.9px"></i><i class="fl" style="left:939.1px"></i>
<div class="strip s2" style="top:64px;height:28.5px;left:424.4px;width:537.6px"><span>ObjectAnimation2</span></div>
<div class="strip s1" style="top:95px;height:29px;left:424.4px;width:537.6px"><span>ObjectAnimation1</span></div>
</div>
<div id="cfline"></div><div id="cfbox">13</div>
<div class="hb" style="left:1452px;border-radius:4px 0 0 4px"><svg width="23" height="23" viewBox="0 0 23 23"><path d="M5.2 5.2L19 10.2 13.4 12.6 10.6 18.6Z" fill="#e6e6e6"/></svg></div>
<div class="hb" style="left:1475.6px;border-radius:0"><svg width="23" height="23" viewBox="0 0 23 23"><g fill="none" stroke="#e6e6e6" stroke-width="1.3"><path d="M3.2 7.8V3.6h4.4M15.6 3.6h4.2v4.2M19.8 15.4v4.2h-4.2M7.6 19.6H3.2v-4.2"/><rect x="7.5" y="7.6" width="8" height="8" stroke-dasharray="1.6 1.6" stroke="#cfcfcf" stroke-width="1"/></g></svg></div>
<div class="hb on" style="left:1499.2px;border-radius:0 4px 4px 0"><svg width="23" height="23" viewBox="0 0 23 23"><rect x="5" y="3.2" width="12" height="5.2" fill="#a9c0e6"/><path d="M4.5 2.4L8 5.8 4.5 9.2 1 5.8Z M17.9 2.4l3.5 3.4-3.5 3.4-3.5-3.4Z" fill="#fff"/><path d="M11 5.8L13.6 5.8" stroke="#4772b3"/><path d="M11.2 11.4l3.6 3.6-3.6 3.6-3.6-3.6Z" fill="none" stroke="#fff" stroke-width="1.3"/><path d="M9.2 3.2L11.2 5.8 9.2 8.4ZM13.2 3.2L11.2 5.8 13.2 8.4Z" fill="#4772b3"/></svg></div>
<div id="filt"><svg width="34" height="23" viewBox="0 0 34 23"><path d="M2.6 4.2H18.4L12.6 11.6V17.2L8.6 19.4V11.6Z" fill="none" stroke="#e6e6e6" stroke-width="1.4" stroke-linejoin="round"/><path d="M25.6 10.4l3.6 3.6 3.6-3.6" fill="none" stroke="#d0d0d0" stroke-width="1.3"/></svg></div>
</div>
<div class="menu" style="left:816px;top:211px;width:216px;height:244px">
<div class="mtitle">File Context Menu</div>
<div class="sep" style="top:34.9px"></div>
<div class="sep" style="top:93.2px"></div>
<div class="sep" style="top:151.5px"></div>
<div class="sep" style="top:209.9px"></div>
<div class="row" style="top:41.0px">
<svg class="ic" width="21" height="21" viewBox="0 0 21 21"><path d="M2.6 8.2v10.2h12.6v-6" fill="none" stroke="#cfcfcf" stroke-width="1.3"/><path d="M2.6 8.4l4.2-4.4h3" fill="none" stroke="#cfcfcf" stroke-width="1.3"/><path d="M2.6 8.4h4.2v-4.4z" fill="#9a9a9a"/><circle cx="15.2" cy="6" r="4.5" fill="#e8e8e8"/><path d="M15.2 3.3v5.4M12.5 6h5.4" stroke="#181818" stroke-width="1.4"/></svg>
<span class="lbl"><u>N</u>ew</span>
<span class="sc" style="right:14px">Ctrl N</span>
<span class="arr"></span>
</div>
<div class="row" style="top:65.0px">
<svg class="ic" width="21" height="21" viewBox="0 0 21 21"><path d="M2.5 3.2h6.2l1 1.8h-7.2z" fill="#d9d9d9"/><rect x="2.5" y="5.4" width="17" height="2.2" fill="#d9d9d9"/><rect x="2.5" y="8.6" width="17" height="9" rx=".6" fill="#d9d9d9"/></svg>
<span class="lbl"><u>O</u>pen...</span>
<span class="sc" style="right:13px">Ctrl O</span>
</div>
<div class="row" style="top:99.0px">
<svg class="ic" width="21" height="21" viewBox="0 0 21 21"><g fill="none" stroke="#d0d0d0" stroke-width="1.7" stroke-linecap="round"><path d="M10.2 6.4l2.1-2.1a3 3 0 0 1 4.3 4.3l-3.2 3.2a3 3 0 0 1-4.3 0"/><path d="M10.8 14.6l-2.1 2.1a3 3 0 0 1-4.3-4.3l3.2-3.2a3 3 0 0 1 4.3 0"/></g></svg>
<span class="lbl"><u>L</u>ink...</span>
</div>
<div class="row" style="top:123.0px">
<svg class="ic" width="21" height="21" viewBox="0 0 21 21"><path d="M15.8 8.2l-6.4 6.4a2.1 2.1 0 0 1-3-3l7.4-7.4a3.4 3.4 0 0 1 4.8 4.8l-8.2 8.2a4.9 4.9 0 0 1-6.9-6.9l6.6-6.6" fill="none" stroke="#d0d0d0" stroke-width="1.5" stroke-linecap="round"/></svg>
<span class="lbl"><u>A</u>ppend...</span>
</div>
<div class="row" style="top:157.0px">
<svg class="ic" width="21" height="21" viewBox="0 0 21 21"><path d="M10.5 2.5v11M5.8 9l4.7 4.7L15.2 9" fill="none" stroke="#d8d8d8" stroke-width="1.4"/><path d="M2.8 13v5.2h15.4V13" fill="none" stroke="#a8a8a8" stroke-width="1.3"/></svg>
<span class="lbl"><u>I</u>mport</span>
<span class="arr"></span>
</div>
<div class="row sel" style="top:181.0px">
<svg class="ic" width="21" height="21" viewBox="0 0 21 21"><path d="M10.5 14.5v-11M5.8 8l4.7-4.7L15.2 8" fill="none" stroke="#fff" stroke-width="1.4"/><path d="M2.8 13v5.2h15.4V13" fill="none" stroke="#d5def0" stroke-width="1.3"/></svg>
<span class="lbl"><u>E</u>xport</span>
<span class="arr"></span>
</div>
<div class="row" style="top:215.0px">
<svg class="ic" width="21" height="21" viewBox="0 0 21 21"><g transform="translate(10.5 10.8)"><g fill="#e0e0e0"><rect x="-2" y="-8.6" width="4" height="5" rx=".8" transform="rotate(0)"/><rect x="-2" y="-8.6" width="4" height="5" rx=".8" transform="rotate(45)"/><rect x="-2" y="-8.6" width="4" height="5" rx=".8" transform="rotate(90)"/><rect x="-2" y="-8.6" width="4" height="5" rx=".8" transform="rotate(135)"/><rect x="-2" y="-8.6" width="4" height="5" rx=".8" transform="rotate(180)"/><rect x="-2" y="-8.6" width="4" height="5" rx=".8" transform="rotate(225)"/><rect x="-2" y="-8.6" width="4" height="5" rx=".8" transform="rotate(270)"/><rect x="-2" y="-8.6" width="4" height="5" rx=".8" transform="rotate(315)"/></g><circle r="6" fill="#e0e0e0"/><circle r="2.6" fill="#181818"/></g></svg>
<span class="lbl"><u>P</u>references...</span>
</div>
</div>
<div class="menu" style="left:1031.5px;top:386.5px;width:284.8px;height:271px">
<div class="row2" style="top:3.1px"><span class="lbl2"><u>C</u>ollada (.dae)</span></div>
<div class="row2" style="top:27.1px"><span class="lbl2"><u>A</u>lembic (.abc)</span></div>
<div class="row2" style="top:51.1px"><span class="lbl2"><u>U</u>niversal Scene Description (.usd*)</span></div>
<div class="row2" style="top:75.1px"><span class="lbl2"><u>G</u>rease Pencil as SVG</span></div>
<div class="row2" style="top:99.1px"><span class="lbl2">Grease <u>P</u>encil as PDF</span></div>
<div class="row2" style="top:123.1px"><span class="lbl2"><u>W</u>avefront (.obj)</span></div>
<div class="row2" style="top:147.1px"><span class="lbl2"><u>S</u>tanford PLY (.ply) (experimental)</span></div>
<div class="row2" style="top:171.1px"><span class="lbl2"><u>F</u>BX (.fbx)</span></div>
<div class="row2" style="top:195.1px"><span class="lbl2">Wavefr<u>o</u>nt (.obj) (legacy)</span></div>
<div class="row2 sel" style="top:219.1px"><span class="lbl2">g<u>l</u>TF 2.0 (.glb/.gltf)</span></div>
<div class="row2" style="top:243.1px"><span class="lbl2">S<u>t</u>l (.stl)</span></div>
</div>
<div id="tip">Export scene as glTF 2.0 file.</div>
<svg id="mouse" width="17.5" height="25" viewBox="0 0 14 20"><path d="M1.6 1.4V13.6L4.5 11 6.5 15.8 8.6 14.9 6.6 10.2H10.6Z" fill="#fff" stroke="#111" stroke-width="1" stroke-linejoin="round"/></svg>
</body></html>
